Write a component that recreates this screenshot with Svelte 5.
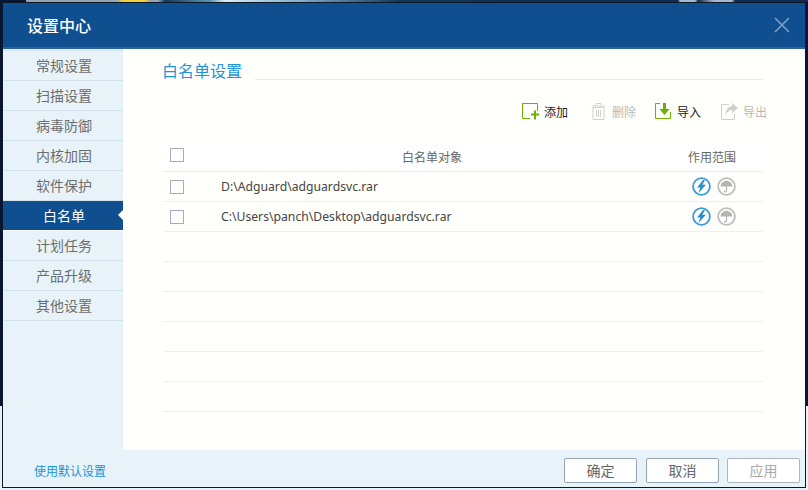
<script>
  const nav = ['常规设置','扫描设置','病毒防御','内核加固','软件保护','白名单','计划任务','产品升级','其他设置'];
  const files = ['D:\\Adguard\\adguardsvc.rar','C:\\Users\\panch\\Desktop\\adguardsvc.rar'];
  const blanks = [0,1,2,3,4,5];
</script>

<div class="screen">
  <div class="window">
    <header class="titlebar">
      <h1>设置中心</h1>
      <svg class="close" width="16" height="16" viewBox="0 0 16 16"><path d="M1 1L15 15M15 1L1 15" stroke="#7ba0c8" stroke-width="1.6" fill="none"/></svg>
    </header>
    <div class="body">
      <nav class="sidebar">
        {#each nav as item, i}
          <div class="navitem" class:active={i === 5}>{item}</div>
        {/each}
      </nav>
      <main class="content">
        <div class="heading">
          <h2>白名单设置</h2>
          <div class="rule"></div>
        </div>
        <div class="toolbar">
          <div class="tool">
            <svg width="17" height="17" viewBox="0 0 17 17"><path d="M8 15.500H.5V.5h15V8" fill="none" stroke="#6cb000"/><path d="M9 11.500h8M13 7.500v9" stroke="#6cb000" stroke-width="2" fill="none"/></svg>
            <span>添加</span>
          </div>
          <div class="tool off del">
            <svg width="17" height="17" viewBox="0 0 17 17"><path d="M3 4.500h11v12H3zM1.500 3h14M6 2.500v-2h5v2M6.500 7v7M8.500 7v7M10.500 7v7" fill="none" stroke="#cfcfcb"/></svg>
            <span>删除</span>
          </div>
          <div class="tool">
            <svg width="17" height="17" viewBox="0 0 17 17"><path d="M5 .5H.5v15h15V9" fill="none" stroke="#6cb000"/><path d="M8 0h3v6h3.500l-5 6-5-6H8z" fill="#6cb000"/></svg>
            <span>导入</span>
          </div>
          <div class="tool off exp">
            <svg width="17" height="17" viewBox="0 0 17 17"><path d="M8 1.500H.5v15h13V11" fill="none" stroke="#cfcfcb"/><path d="M11 0l6 5-6 5V7C8 7 6 9 4.500 12 5 7 7 3.500 11 3z" fill="#cfcfcb"/></svg>
            <span>导出</span>
          </div>
        </div>
        <div class="table">
          <div class="row head">
            <div class="check-cell"><span class="check"></span></div>
            <div class="name center">白名单对象</div>
            <div class="scope">作用范围</div>
          </div>
          {#each files as f}
            <div class="row">
              <div class="check-cell"><span class="check"></span></div>
              <div class="name">{f}</div>
              <div class="scope icons">
                <svg width="19" height="19" viewBox="0 0 19 19"><circle cx="9.500" cy="9.500" r="8.400" fill="#fff" stroke="#3a9bd8" stroke-width="1.800"/><path d="M11 3L5 10.500h3.200L6.500 16l7.500-8.200h-3.600L13 3z" fill="#2b8fd0"/></svg>
                <svg width="19" height="19" viewBox="0 0 19 19"><circle cx="9.500" cy="9.500" r="8.400" fill="#fff" stroke="#bdbdbb" stroke-width="1.800"/><path d="M3.500 9.500C4 6 6.500 3.800 9.500 3.800s5.500 2.200 6 5.700z" fill="#b4b4b2"/><path d="M9.500 9v4.700c0 1.500-2.200 1.500-2.400 .2" fill="none" stroke="#b4b4b2" stroke-width="1.200"/></svg>
              </div>
            </div>
          {/each}
          {#each blanks as b}
            <div class="row blank"></div>
          {/each}
        </div>
      </main>
    </div>
    <footer class="footer">
      <span class="link">使用默认设置</span>
      <div class="buttons">
        <button>确定</button>
        <button>取消</button>
        <button class="disabled">应用</button>
      </div>
    </footer>
  </div>
</div>

<style>
  :global(body) { margin: 0; background: #e6f1f7; }
  .screen {
    width: 808px; height: 490px; box-sizing: border-box;
    padding: 2px;
    background:
      linear-gradient(90deg, transparent 26px, #9aa3b5 26px, #9aa3b5 118px, #f0d040 122px, #f0d040 145px, #9aa3b5 150px, #9aa3b5 158px, #123a5a 165px, #5d93b5 210px, #dcecf5 225px, #7fb0cc 300px, #123458 400px, #0f2a55 678px, #a9b6d0 680px, #a9b6d0 695px, #0f2a55 698px, #a9b6d0 714px, #a9b6d0 732px, #0f2a55 735px) no-repeat 0 0 / 100% 2px,
      linear-gradient(180deg, #071637 0, #071637 406px, #e6f1f7 406px);
    font-family: "Noto Sans CJK SC", "Liberation Sans", sans-serif;
    font-size: 12px;
  }
  .window { height: 484px; display: flex; flex-direction: column; background: #e8f3f9; border: 1px solid #0c1a26; }
  .titlebar {
    height: 44px; flex: none;
    background: #0f4e8f; border-bottom: 2px solid #2b629c;
    display: flex; align-items: center; justify-content: space-between;
    padding: 0 15px 0 24px;
  }
  h1 { margin: 0; font-size: 16px; font-weight: 500; color: #fff; line-height: 43px; }
  .close { display: block; margin-top: -1px; }
  .body { flex: 1; display: flex; min-height: 0; }
  .sidebar { width: 120px; flex: none; margin-top: 1px; border-top: 1px solid #d3e2ea; }
  .navitem {
    height: 29px; line-height: 29px; border-bottom: 1px solid #d3e2ea; padding-left: 2px;
    text-align: center; font-size: 14px; color: #6d6d6d; position: relative;
  }
  .navitem.active { background: #0f4e8f; color: #fff; border-bottom-color: #fff; }
  .navitem.active::after {
    content: ""; position: absolute; right: 0; top: 9px;
    border: 5px solid transparent; border-right: 5px solid #fff; border-left: 0;
  }
  .content { flex: 1; background: #fffffb; padding: 13px 42px 0 40px; }
  .heading { display: flex; align-items: flex-end; height: 17px; }
  h2 { margin: 0; font-size: 16px; font-weight: 400; color: #2094d6; line-height: 20px; position: relative; top: 1px; left: -1px; }
  .rule { flex: 1; border-bottom: 1px solid #e6edf2; margin-left: 12px; margin-bottom: -1px; }
  .toolbar {
    display: flex; justify-content: flex-end; gap: 19px; height: 18px;
    margin-top: 23px; margin-right: -4px;
  }
  .tool { display: flex; align-items: center; gap: 5px; color: #1c1c1c; }
  .tool svg { display: block; }
  .tool.off { color: #b9b9b5; }
  .tool.del { margin-left: 3px; }
  .tool.exp { margin-left: 1px; }
  .table { margin-top: 21px; }
  .row {
    height: 29px; border-bottom: 1px solid #efefeb; display: flex; align-items: center;
  }
  .row.head { background: #fff; height: 30px; border-bottom-color: #e9e9ef; }
  .row.head .check-cell { margin-top: -2px; }
  .check-cell { width: 28px; flex: none; display: flex; padding-left: 7px; box-sizing: border-box; }
  .check { width: 12px; height: 12px; border: 1px solid #a2adb8; background: #fff; display: block; }
  .name { flex: 1; padding-left: 30px; font-family: "Noto Sans", "Noto Sans CJK SC", sans-serif; font-size: 12.2px; color: #444; }
  .name.center { padding-left: 211px; color: #666; font-family: "Noto Sans CJK SC", sans-serif; font-size: 12px; }
  .scope { width: 90px; flex: none; text-align: center; color: #666; margin-right: 6px; }
  .icons { display: flex; justify-content: center; gap: 6px; box-sizing: border-box; padding-left: 4px; }
  .icons svg { display: block; }
  .footer { height: 37px; flex: none; box-sizing: border-box; display: flex; align-items: center; justify-content: space-between; padding: 3px 5px 0 31px; }
  .link { color: #2094d6; font-size: 12px; }
  .buttons { display: flex; gap: 9px; }
  button {
    width: 73px; height: 25px; border: 1px solid #93a5b3; border-radius: 2px; background: #fff;
    color: #666; font: inherit; font-size: 14px; padding: 0; line-height: 23px;
  }
  button.disabled { color: #aaa; border-color: #aab7c1; margin-left: -1px; }
</style>
